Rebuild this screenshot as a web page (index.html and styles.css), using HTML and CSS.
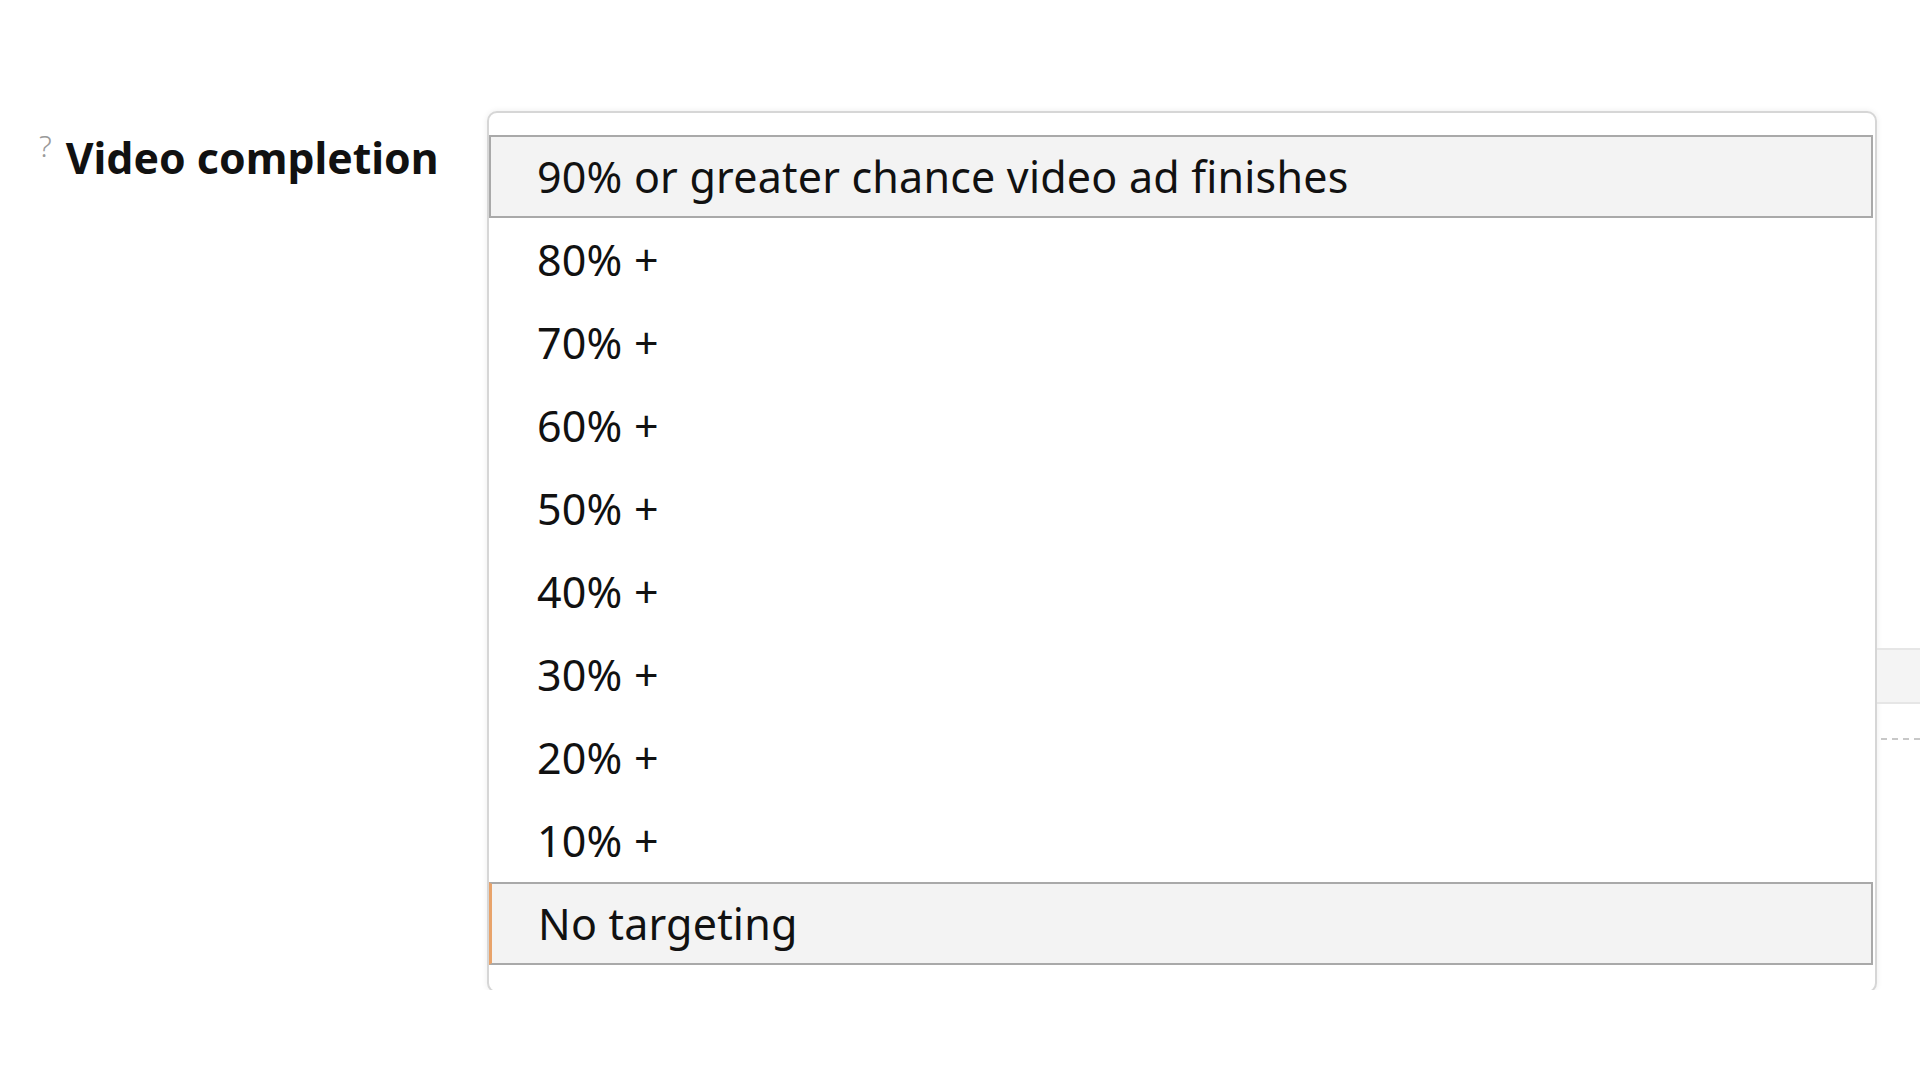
FILE: index.html
```html
<!DOCTYPE html>
<html lang="en">
<head>
    <meta charset="UTF-8">
    <meta name="viewport" content="width=device-width, initial-scale=1.0">
    <title>Video completion</title>
    <link rel="stylesheet" href="styles.css">
</head>
<body>

    <div class="frame">
        <div class="field">
            <div class="label">
                <span class="help">?</span>
                <span class="label-text">Video completion</span>
            </div>

            <div class="popup">
                <ul class="options">
                    <li class="option selected">90% or greater chance video ad finishes</li>
                    <li class="option">80% +</li>
                    <li class="option">70% +</li>
                    <li class="option">60% +</li>
                    <li class="option">50% +</li>
                    <li class="option">40% +</li>
                    <li class="option">30% +</li>
                    <li class="option">20% +</li>
                    <li class="option">10% +</li>
                    <li class="option focused">No targeting</li>
                </ul>
            </div>

            <div class="behind">
                <div class="behind-box"></div>
                <div class="behind-line"></div>
            </div>
        </div>
    </div>

</body>
</html>
```

FILE: styles.css
```css
body {
    margin: 0;
    background: #fff;
    font-family: "Noto Sans", Arial, sans-serif;
    font-variant-ligatures: none;
    color: #111;
}
.frame {
    height: 990px;
    overflow: hidden;
}
.field {
    display: flex;
    padding-top: 111px;
}
.label {
    width: 487px;
    flex-shrink: 0;
    display: flex;
    align-items: flex-start;
    padding-left: 39px;
    box-sizing: border-box;
}
.help {
    font-size: 30px;
    font-weight: 300;
    color: #9a9a9a;
    line-height: 1;
    margin-top: 20px;
    margin-right: 14px;
}
.label-text {
    font-size: 42.8px;
    font-weight: 700;
    line-height: 1;
    margin-top: 26px;
}
.popup {
    width: 1390px;
    flex-shrink: 0;
    box-sizing: border-box;
    border: 2px solid #d6d6d6;
    border-radius: 10px;
    box-shadow: 0 0 6px rgba(0, 0, 0, 0.08);
    padding: 22px 2px 26px 0;
    background: #fff;
}
.options {
    list-style: none;
    margin: 0;
    padding: 0;
}
.option {
    height: 83px;
    box-sizing: border-box;
    display: flex;
    align-items: center;
    padding-left: 46px;
    font-size: 43px;
    letter-spacing: 0.2px;
    border: 2px solid transparent;
}
.selected,
.focused {
    background: #f3f3f3;
    border: 2px solid #a9a9a9;
}
.focused {
    border-left: 3px solid #e8a36a;
}
.behind {
    flex: 1;
    padding-top: 537px;
}
.behind-box {
    height: 52px;
    background: #f4f4f4;
    border-top: 2px solid #e6e6e6;
    border-bottom: 2px solid #e6e6e6;
}
.behind-line {
    margin-top: 34px;
    border-top: 2px dashed #c8c8c8;
    margin-left: 4px;
}
```
